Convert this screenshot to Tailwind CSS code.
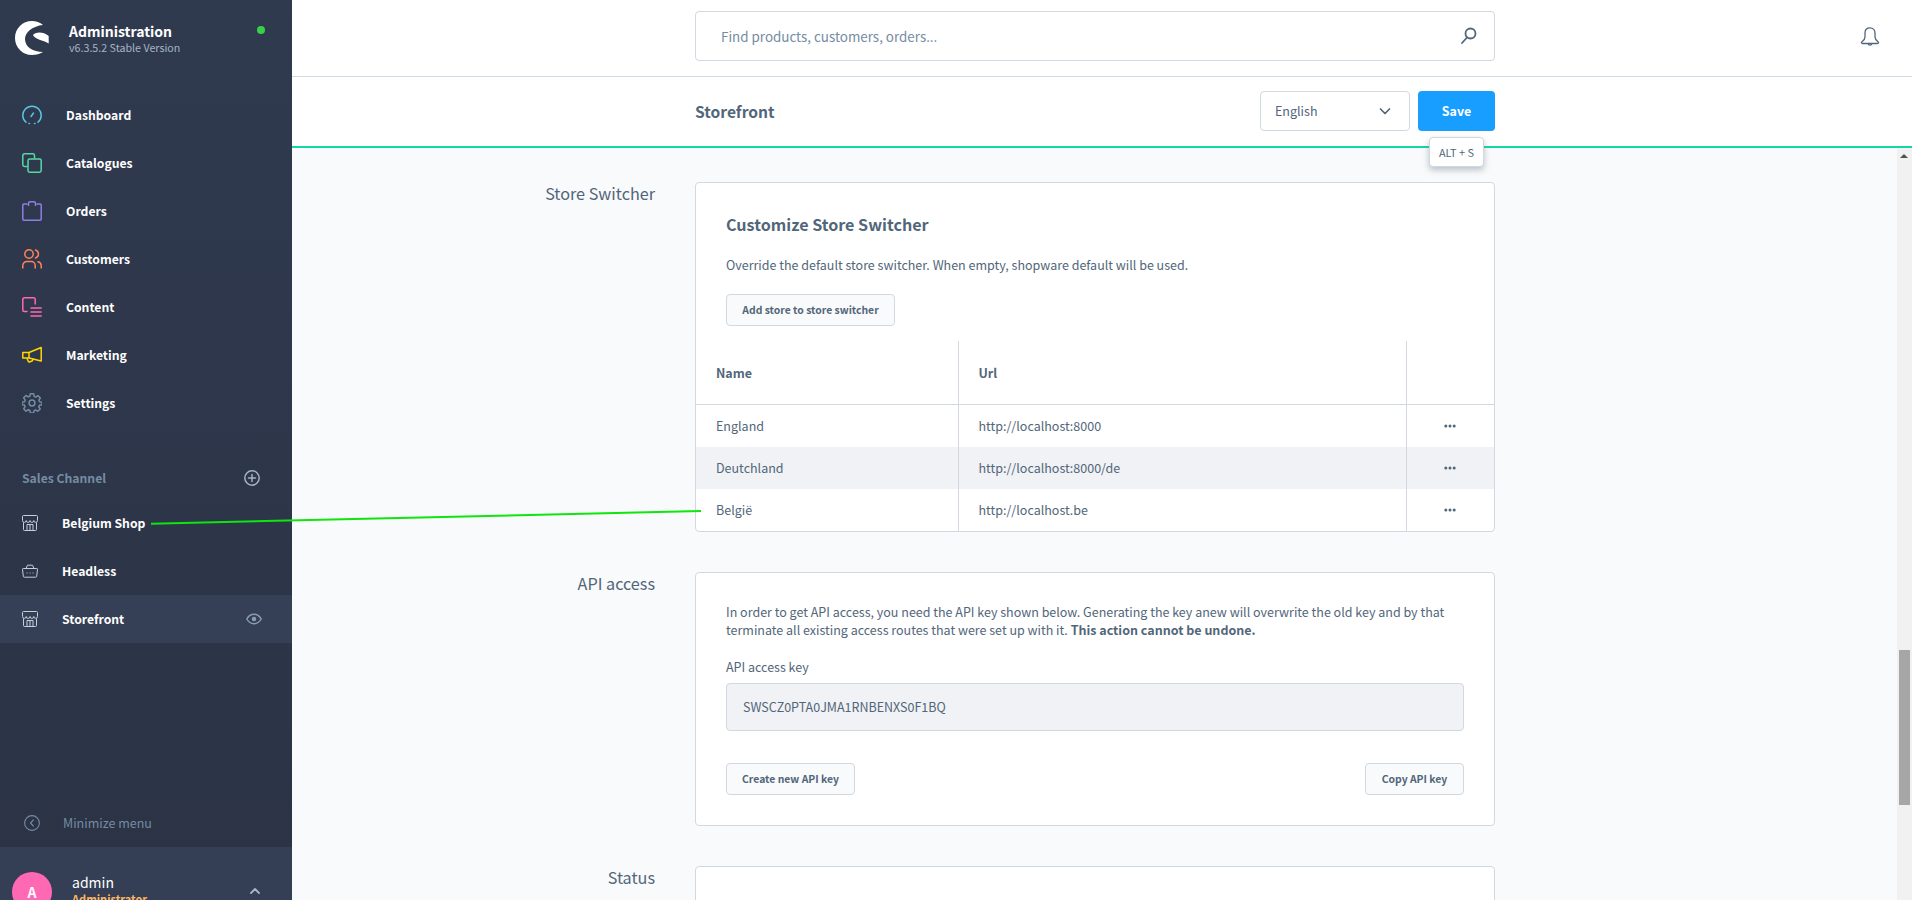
<!DOCTYPE html>
<html lang="en">
<head>
  <meta charset="UTF-8" />
  <title>Storefront</title>
  <script src="https://cdn.jsdelivr.net/npm/@tailwindcss/browser@4"></script>
</head>
<body class="h-[900px] overflow-hidden bg-[#f9fafb] font-['Noto_Sans_CJK_SC',sans-serif] text-[12.5px] text-[#52667a]">
<div class="relative flex h-[900px]">

  <!-- Sidebar -->
  <aside class="flex h-[900px] w-[292px] shrink-0 flex-col bg-gradient-to-b from-[#303a4f] to-[#2b3345] text-[12.2px] text-white">
    <div class="relative flex h-[77px] shrink-0 items-start pl-[15px] pt-[21px]">
      <svg class="h-[34px] w-[34px]" viewBox="0 0 34 34" fill="#fff"><path d="M28 4C25 1.500 21 0 17 0 7.500 0 0 7.500 0 17s7.500 17 17 17c4 0 8-1.200 11-3-10 0-18-5-18-13 0-7 8-13 18-14z"/><path d="M18 14C20 11 28 10 33.700 15V22.500C28 19 20 18.500 18 14z"/></svg>
      <div class="ml-[20px] flex flex-col">
        <span class="text-[14px] leading-[20px] font-semibold">Administration</span>
        <span class="text-[10.700px] leading-[14px] text-[#a5b4c4]">v6.3.5.2 Stable Version</span>
      </div>
      <span class="absolute left-[257px] top-[26px] h-2 w-2 rounded-full bg-[#37d046]"></span>
    </div>

    <nav class="mt-[14px] flex flex-col">
      <a class="flex h-12 items-center pl-[22px] font-semibold">
        <svg class="mr-6 h-5 w-5" viewBox="0 0 20 20" fill="none" stroke="#57c5e5" stroke-width="1.500" stroke-linecap="round"><path d="M4 17.300A9.200 9.200 0 1 1 16 17.300"/><path d="M7 18.500h.5M12.500 18.500h.5"/><path d="M9 11.500l2.500-3.500"/></svg>
        Dashboard
      </a>
      <a class="flex h-12 items-center pl-[22px] font-semibold">
        <svg class="mr-6 h-5 w-5" viewBox="0 0 20 20" fill="none" stroke="#57d9a3" stroke-width="1.500"><path d="M5.500 13.500H2.500a1.700 1.700 0 0 1-1.700-1.700V2.500A1.700 1.700 0 0 1 2.500.8h8.300a1.700 1.700 0 0 1 1.700 1.700v3"/><rect x="6" y="6" width="13.200" height="13.200" rx="1.700"/></svg>
        Catalogues
      </a>
      <a class="flex h-12 items-center pl-[22px] font-semibold">
        <svg class="mr-6 h-5 w-5" viewBox="0 0 20 20" fill="none" stroke="#8e7fe0" stroke-width="1.500"><path d="M5.500 3H2a1.200 1.200 0 0 0-1.200 1.200v13.800A1.200 1.200 0 0 0 2 19.200h16a1.200 1.200 0 0 0 1.200-1.200V4.200A1.200 1.200 0 0 0 18 3h-3.500"/><path d="M6.500 5V2.500a1.700 1.700 0 0 1 1.700-1.700h3.600a1.700 1.700 0 0 1 1.700 1.700V5"/></svg>
        Orders
      </a>
      <a class="flex h-12 items-center pl-[22px] font-semibold">
        <svg class="mr-6 h-5 w-5" viewBox="0 0 20 20" fill="none" stroke="#ff8259" stroke-width="1.500" stroke-linecap="round"><circle cx="7" cy="5" r="4.200"/><path d="M.8 19v-2.500a4 4 0 0 1 4-4h4.400a4 4 0 0 1 4 4V19"/><path d="M13.500 1a4.200 4.200 0 0 1 0 8"/><path d="M16 12.800a4 4 0 0 1 3.200 3.700V19"/></svg>
        Customers
      </a>
      <a class="flex h-12 items-center pl-[22px] font-semibold">
        <svg class="mr-6 h-5 w-5" viewBox="0 0 20 20" fill="none" stroke="#ff68b4" stroke-width="1.500" stroke-linecap="round"><path d="M5 14.500H2.300a1.500 1.500 0 0 1-1.500-1.500V2.300A1.500 1.500 0 0 1 2.300.8h9.400a1.500 1.500 0 0 1 1.500 1.500V7"/><path d="M9 11h10.200M9 15h10.200M9 19h10.200"/></svg>
        Content
      </a>
      <a class="flex h-12 items-center pl-[22px] font-semibold">
        <svg class="mr-6 h-5 w-5" viewBox="0 0 20 20" fill="none" stroke="#ffd700" stroke-width="1.500" stroke-linejoin="round"><path d="M.8 7.500h6.200L19.200 2.500v13.500L7 13H.8z"/><path d="M7 7.500V13"/><path d="M5 13.300l1 2.500a1.500 1.500 0 0 0 2 1l2-.8a1.500 1.500 0 0 0 .6-2.100"/></svg>
        Marketing
      </a>
      <a class="flex h-12 items-center pl-[22px] font-semibold">
        <svg class="mr-6 h-5 w-5" viewBox="0 0 24 24" fill="none" stroke="#758ca3" stroke-width="1.800" stroke-linejoin="round"><circle cx="12" cy="12" r="3.500"/><path d="M10 1h4l.6 3.100 1.900.8L19.200 3.200l2.800 2.800-1.700 2.600.8 1.900L24 11v3l-3.100.6-.8 1.900 1.700 2.700-2.800 2.800-2.600-1.700-1.900.8L14 24h-4l-.6-3.100-1.900-.8-2.700 1.700L2 19l1.700-2.600-.8-1.900L0 14v-3l3.100-.6.800-1.900L2 5.800 4.800 3l2.700 1.700 1.900-.8z"/></svg>
        Settings
      </a>
    </nav>

    <div class="mt-[39px] flex h-[24px] items-center justify-between pl-[22px] pr-[32px] font-semibold text-[#758ca3]">
      <span>Sales Channel</span>
      <svg class="h-4 w-4" viewBox="0 0 16 16" fill="none" stroke="#a5b4c4" stroke-width="1.500" stroke-linecap="round"><circle cx="8" cy="8" r="7.200"/><path d="M8 4.500v7M4.500 8h7"/></svg>
    </div>

    <div class="mt-[9px] flex flex-col">
      <a class="flex h-12 items-center pl-[22px] font-semibold">
        <svg class="mr-6 h-4 w-4" viewBox="0 0 16 16" fill="none" stroke="#c3cfda" stroke-width="1"><path d="M1.500.5h13a1 1 0 0 1 1 1v4a1.800 1.800 0 0 1-3.700 0 1.900 1.900 0 0 1-3.800 0 1.900 1.900 0 0 1-3.800 0 1.800 1.800 0 0 1-3.700 0v-4a1 1 0 0 1 1-1z"/><path d="M1.500 7.500v7a1 1 0 0 0 1 1h11a1 1 0 0 0 1-1v-7"/><path d="M5 15.500V9.500h6v6M8 9.500v6"/></svg>
        Belgium Shop
      </a>
      <a class="flex h-12 items-center pl-[22px] font-semibold">
        <svg class="mr-6 h-4 w-4" viewBox="0 0 16 16" fill="none" stroke="#c3cfda" stroke-width="1" stroke-linejoin="round"><path d="M1.200 5.500h13.600a.7.7 0 0 1 .7.8l-.8 7a1 1 0 0 1-1 .9H2.300a1 1 0 0 1-1-.9l-.8-7a.7.7 0 0 1 .7-.8z"/><path d="M4 5.500L5.500 2.200h5L12 5.500"/><path d="M4.500 10h1M7.500 10h1M10.500 10h1"/></svg>
        Headless
      </a>
      <a class="flex h-12 items-center bg-[#353f56] pl-[22px] pr-[30px] font-semibold">
        <svg class="mr-6 h-4 w-4" viewBox="0 0 16 16" fill="none" stroke="#c3cfda" stroke-width="1"><path d="M1.500.5h13a1 1 0 0 1 1 1v4a1.800 1.800 0 0 1-3.700 0 1.900 1.900 0 0 1-3.800 0 1.900 1.900 0 0 1-3.800 0 1.800 1.800 0 0 1-3.700 0v-4a1 1 0 0 1 1-1z"/><path d="M1.500 7.500v7a1 1 0 0 0 1 1h11a1 1 0 0 0 1-1v-7"/><path d="M5 15.500V9.500h6v6M8 9.500v6"/></svg>
        Storefront
        <svg class="ml-auto h-4 w-4" viewBox="0 0 16 16" fill="none" stroke="#8a9db0" stroke-width="1.500"><path d="M.8 8C2.500 5 5 3.300 8 3.300S13.500 5 15.200 8c-1.700 3-4.200 4.700-7.200 4.700S2.500 11 .8 8z"/><circle cx="8" cy="8" r="1.500" fill="#8a9db0"/></svg>
      </a>
    </div>

    <div class="mt-auto flex h-[48px] items-center pl-6 text-[12.5px] text-[#758ca3]">
      <svg class="mr-[23px] h-4 w-4" viewBox="0 0 16 16" fill="none" stroke="#758ca3" stroke-width="1.100" stroke-linecap="round"><circle cx="8" cy="8" r="7.400"/><path d="M9.300 5L6.500 8l2.800 3"/></svg>
      Minimize menu
    </div>

    <div class="flex h-[53px] shrink-0 overflow-hidden bg-[#343f56] pl-3 pt-[25px]">
      <div class="flex h-10 w-10 shrink-0 items-center justify-center rounded-full bg-[#ff69b4] text-[14px] font-semibold">A</div>
      <div class="ml-5 flex flex-col">
        <span class="text-[14px] leading-[20px]">admin</span>
        <span class="text-[11px] leading-[15px] font-semibold text-[#ffb75d]">Administrator</span>
      </div>
      <svg class="ml-auto mr-[32px] mt-[14px] h-[10px] w-[10px]" viewBox="0 0 10 10" fill="none" stroke="#a5b4c4" stroke-width="1.800" stroke-linecap="round" stroke-linejoin="round"><path d="M1 7l4-4 4 4"/></svg>
    </div>
  </aside>

  <!-- Main -->
  <main class="flex min-w-0 flex-1 flex-col">
    <header class="flex h-[77px] shrink-0 items-start border-b border-[#d1d9e0] bg-white pl-[403px] pt-[11px]">
      <div class="flex h-[50px] w-[800px] items-center justify-between rounded-[4px] border border-[#d1d9e0] px-[25px] text-[13.400px] text-[#758ca3]">
        <span>Find products, customers, orders...</span>
        <svg class="mr-[-9px] h-[18px] w-[18px]" viewBox="0 0 18 18" fill="none" stroke="#52667a" stroke-width="1.800" stroke-linecap="round"><circle cx="10.500" cy="6.500" r="5"/><path d="M7 10.500L2 16"/></svg>
      </div>
      <svg class="ml-[365px] mt-[16px] h-5 w-5" viewBox="0 0 20 20" fill="none" stroke="#52667a" stroke-width="1.300" stroke-linejoin="round"><path d="M10 .8c-3.200 0-5 2.300-5 5.200v4c0 2-1 3.300-3 4.700-1 .7-.6 1.800.5 1.800h15c1.100 0 1.500-1.100.5-1.800-2-1.400-3-2.700-3-4.700V6c0-2.900-1.800-5.200-5-5.200z"/><path d="M8.300 17c0 1.500 3.400 1.500 3.400 0"/></svg>
    </header>

    <div class="relative flex h-[71px] shrink-0 items-start border-b-2 border-[#14d5a5] bg-white pl-[403px] pr-[417px] pt-[14px]">
      <h1 class="mt-[8px] text-[15.600px] leading-[24px] font-semibold">Storefront</h1>
      <div class="ml-auto flex h-10 w-[150px] shrink-0 items-center justify-between rounded-[4px] border border-[#d1d9e0] pl-[14px] pr-[18px]">
        <span>English</span>
        <svg class="h-3 w-3" viewBox="0 0 12 12" fill="none" stroke="#52667a" stroke-width="1.700" stroke-linecap="round" stroke-linejoin="round"><path d="M1.500 4l4.500 4.500L10.500 4"/></svg>
      </div>
      <button class="ml-2 flex h-10 w-[77px] shrink-0 items-center justify-center rounded-[4px] bg-[#189eff] text-[12.400px] font-semibold text-white">Save</button>
      <div class="absolute left-[1137px] top-[60px] z-10 flex h-[30px] w-[55px] items-center justify-center rounded-[4px] border border-[#d1d9e0] bg-white pt-[1px] text-[10.900px] shadow-[0_3px_6px_rgba(120,138,155,0.5)]">ALT + S</div>
    </div>

    <div class="relative flex min-h-0 flex-1 flex-col gap-[40px] overflow-hidden pt-[34px]">
      <!-- Store switcher -->
      <section class="flex items-start">
        <h2 class="mt-[-1px] w-[363px] shrink-0 text-right text-[16.200px] leading-[24px]">Store Switcher</h2>
        <div class="ml-10 h-[350px] w-[800px] overflow-hidden rounded-[4px] border border-[#d1d9e0] bg-white">
          <div class="px-[30px] pt-[29px]">
            <h3 class="text-[16.100px] leading-[24px] font-bold">Customize Store Switcher</h3>
            <p class="mt-[18px] leading-[22px]">Override the default store switcher. When empty, shopware default will be used.</p>
            <button class="mt-[18px] flex h-8 w-[169px] items-center justify-center rounded-[4px] border border-[#d1d9e0] bg-[#f9fafb] text-[10.400px] font-semibold">Add store to store switcher</button>
          </div>
          <table class="mt-[15px] w-full table-fixed border-collapse">
            <thead>
              <tr class="h-[63px] border-b border-[#d1d9e0] text-left font-semibold">
                <th class="w-[262px] border-r border-[#d1d9e0] pl-5 pt-[2px] font-semibold">Name</th>
                <th class="border-r border-[#d1d9e0] pl-5 pt-[2px] font-semibold">Url</th>
                <th class="w-[88px]"></th>
              </tr>
            </thead>
            <tbody>
              <tr class="h-[43px]">
                <td class="border-r border-[#d1d9e0] pl-5 pt-[1px]">England</td>
                <td class="border-r border-[#d1d9e0] pl-5 pt-[1px]">http://localhost:8000</td>
                <td><svg class="mx-auto h-[4px] w-3" viewBox="0 0 12 4" fill="#52667a"><circle cx="1.800" cy="2" r="1.500"/><circle cx="6" cy="2" r="1.500"/><circle cx="10.200" cy="2" r="1.500"/></svg></td>
              </tr>
              <tr class="h-[42px] bg-[#f0f2f5]">
                <td class="border-r border-[#d1d9e0] pl-5 pt-[1px]">Deutchland</td>
                <td class="border-r border-[#d1d9e0] pl-5 pt-[1px]">http://localhost:8000/de</td>
                <td><svg class="mx-auto h-[4px] w-3" viewBox="0 0 12 4" fill="#52667a"><circle cx="1.800" cy="2" r="1.500"/><circle cx="6" cy="2" r="1.500"/><circle cx="10.200" cy="2" r="1.500"/></svg></td>
              </tr>
              <tr class="h-[42px]">
                <td class="border-r border-[#d1d9e0] pl-5">België</td>
                <td class="border-r border-[#d1d9e0] pl-5">http://localhost.be</td>
                <td><svg class="mx-auto h-[4px] w-3" viewBox="0 0 12 4" fill="#52667a"><circle cx="1.800" cy="2" r="1.500"/><circle cx="6" cy="2" r="1.500"/><circle cx="10.200" cy="2" r="1.500"/></svg></td>
              </tr>
            </tbody>
          </table>
        </div>
      </section>

      <!-- API access -->
      <section class="flex items-start">
        <h2 class="mt-[-1px] w-[363px] shrink-0 text-right text-[16.200px] leading-[24px]">API access</h2>
        <div class="ml-10 h-[254px] w-[800px] rounded-[4px] border border-[#d1d9e0] bg-white px-[30px] pt-[30px]">
          <p class="leading-[18px]">In order to get API access, you need the API key shown below. Generating the key anew will overwrite the old key and by that terminate all existing access routes that were set up with it. <b class="font-bold">This action cannot be undone.</b></p>
          <div class="mt-[19px] leading-[18px]">API access key</div>
          <div class="mt-[7px] flex h-12 items-center rounded-[4px] border border-[#d1d9e0] bg-[#f0f2f5] px-4">SWSCZ0PTA0JMA1RNBENXS0F1BQ</div>
          <div class="mt-8 flex justify-between">
            <button class="flex h-8 w-[129px] items-center justify-center rounded-[4px] border border-[#d1d9e0] bg-[#f9fafb] text-[10.400px] font-semibold">Create new API key</button>
            <button class="flex h-8 w-[99px] items-center justify-center rounded-[4px] border border-[#d1d9e0] bg-[#f9fafb] text-[10.400px] font-semibold">Copy API key</button>
          </div>
        </div>
      </section>

      <!-- Status -->
      <section class="flex items-start">
        <h2 class="mt-[-1px] w-[363px] shrink-0 text-right text-[16.200px] leading-[24px]">Status</h2>
        <div class="ml-10 h-[200px] w-[800px] rounded-[4px] border border-[#d1d9e0] bg-white"></div>
      </section>

      <!-- Scrollbar -->
      <div class="absolute bottom-0 right-0 top-0 w-[15px] bg-[#f1f1f1]">
        <div class="absolute left-[3px] top-[6px] h-0 w-0 border-x-[4px] border-b-[4px] border-x-transparent border-b-[#505050]"></div>
        <div class="absolute left-[2px] top-[502px] h-[155px] w-[11px] bg-[#a6a6a6]"></div>
      </div>
    </div>
  </main>

  <!-- Annotation line drawn over the page -->
  <svg class="pointer-events-none absolute left-0 top-0 h-[900px] w-[1912px]" viewBox="0 0 1912 900"><line x1="151" y1="523.700" x2="701" y2="511" stroke="#0ee60e" stroke-width="2"/></svg>
</div>
</body>
</html>
